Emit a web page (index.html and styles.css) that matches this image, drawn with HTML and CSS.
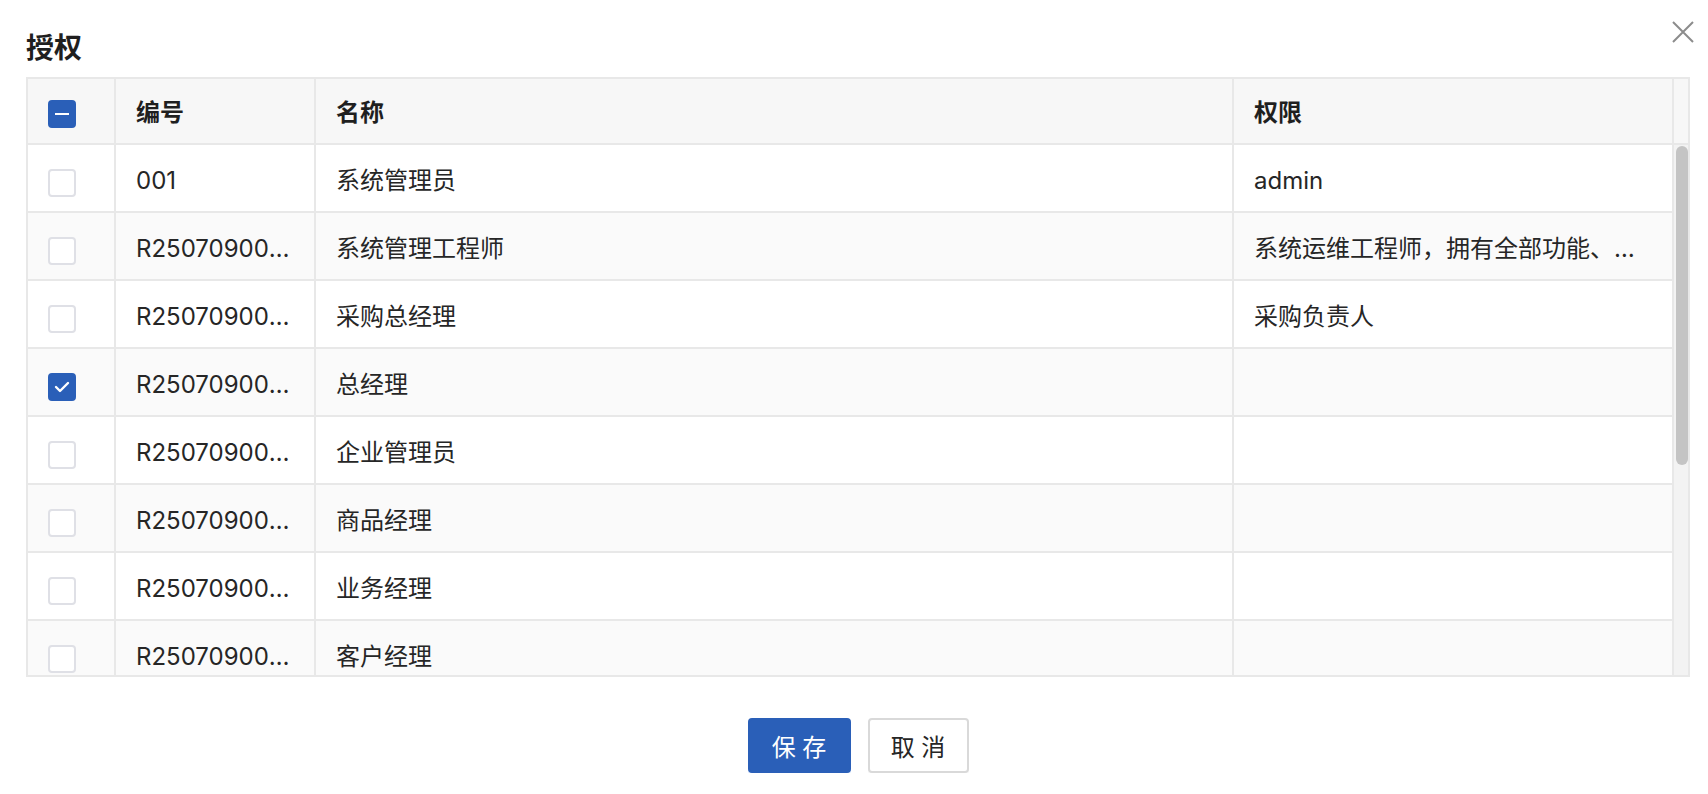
FILE: index.html
```
<!DOCTYPE html>
<html lang="zh-CN">
<head>
<meta charset="utf-8">
<title>授权</title>
<link rel="stylesheet" href="styles.css">
</head>
<body>
<div class="dialog">
  <h1 class="dialog-title">授权</h1>
  <button class="close" aria-label="关闭">
    <svg width="22" height="22" viewBox="0 0 22 22"><path d="M1 1 L21 21 M21 1 L1 21" stroke="#8c8c8c" stroke-width="2" fill="none"/></svg>
  </button>

  <div class="table">
    <div class="thead">
      <div class="cell cell-check"><span class="checkbox indeterminate"></span></div>
      <div class="cell">编号</div>
      <div class="cell">名称</div>
      <div class="cell">权限</div>
      <div class="gutter"></div>
    </div>
    <div class="tbody">
      <div class="rows">
        <div class="row">
          <div class="cell cell-check"><span class="checkbox"></span></div>
          <div class="cell">001</div>
          <div class="cell">系统管理员</div>
          <div class="cell">admin</div>
        </div>
        <div class="row">
          <div class="cell cell-check"><span class="checkbox"></span></div>
          <div class="cell">R25070900001</div>
          <div class="cell">系统管理工程师</div>
          <div class="cell">系统运维工程师，拥有全部功能、全部数据权限</div>
        </div>
        <div class="row">
          <div class="cell cell-check"><span class="checkbox"></span></div>
          <div class="cell">R25070900002</div>
          <div class="cell">采购总经理</div>
          <div class="cell">采购负责人</div>
        </div>
        <div class="row">
          <div class="cell cell-check"><span class="checkbox checked"><svg width="16" height="12" viewBox="0 0 16 12"><path d="M2 6 L6 10 L14 2" stroke="#fff" stroke-width="2.4" fill="none" stroke-linecap="round" stroke-linejoin="round"/></svg></span></div>
          <div class="cell">R25070900003</div>
          <div class="cell">总经理</div>
          <div class="cell"></div>
        </div>
        <div class="row">
          <div class="cell cell-check"><span class="checkbox"></span></div>
          <div class="cell">R25070900004</div>
          <div class="cell">企业管理员</div>
          <div class="cell"></div>
        </div>
        <div class="row">
          <div class="cell cell-check"><span class="checkbox"></span></div>
          <div class="cell">R25070900005</div>
          <div class="cell">商品经理</div>
          <div class="cell"></div>
        </div>
        <div class="row">
          <div class="cell cell-check"><span class="checkbox"></span></div>
          <div class="cell">R25070900006</div>
          <div class="cell">业务经理</div>
          <div class="cell"></div>
        </div>
        <div class="row">
          <div class="cell cell-check"><span class="checkbox"></span></div>
          <div class="cell">R25070900007</div>
          <div class="cell">客户经理</div>
          <div class="cell"></div>
        </div>
        <div class="row">
          <div class="cell cell-check"><span class="checkbox"></span></div>
          <div class="cell">R25070900008</div>
          <div class="cell">财务经理</div>
          <div class="cell"></div>
        </div>
        <div class="row">
          <div class="cell cell-check"><span class="checkbox"></span></div>
          <div class="cell">R25070900009</div>
          <div class="cell">仓库管理员</div>
          <div class="cell"></div>
        </div>
      </div>
      <div class="scrollbar"><div class="thumb"></div></div>
    </div>
  </div>

  <div class="footer">
    <button class="btn btn-primary">保 存</button>
    <button class="btn btn-default">取 消</button>
  </div>
</div>
</body>
</html>
```
FILE: styles.css
```
* { box-sizing: border-box; }
html, body { margin: 0; background: #fff; }
body {
  font-family: Inter, "Noto Sans CJK SC", sans-serif;
  color: #262626;
  font-size: 24px;
}
.dialog {
  position: relative;
  padding: 28px 18px 0 26px;
}
.dialog-title {
  margin: 0 0 9px 0;
  font-size: 28px;
  line-height: 40px;
  font-weight: 700;
  color: #1f1f1f;
}
.close {
  position: absolute;
  top: 21px;
  right: 14px;
  width: 22px;
  height: 22px;
  padding: 0;
  border: 0;
  background: none;
  display: block;
}
.close svg { display: block; }

.table {
  border: 2px solid #e8e8e8;
  width: 1664px;
}
.thead {
  display: grid;
  grid-template-columns: 88px 200px 918px 440px 14px;
  background: #f7f7f7;
  border-bottom: 2px solid #e8e8e8;
  height: 66px;
  font-weight: 700;
  color: #1f1f1f;
}
.cell {
  border-right: 2px solid #e8e8e8;
  padding: 2px 20px 0;
  line-height: 64px;
  white-space: nowrap;
  overflow: hidden;
  text-overflow: ellipsis;
}
.cell-check {
  display: flex;
  align-items: center;
  padding-top: 5px;
}
.gutter { background: #f7f7f7; }

.tbody {
  display: flex;
  height: 530px;
}
.rows {
  width: 1646px;
  overflow: hidden;
}
.row {
  display: grid;
  grid-template-columns: 88px 200px 918px 440px;
  height: 68px;
  border-bottom: 2px solid #e8e8e8;
  background: #fff;
}
.row:nth-child(even) { background: #fafafa; }
.row .cell { line-height: 66px; padding-top: 3px; }
.row .cell-check { padding-top: 9px; }

.scrollbar {
  width: 14px;
  background: #f3f3f3;
  padding: 1px 0 0 2px;
}
.thumb {
  width: 12px;
  height: 319px;
  border-radius: 6px;
  background: #c4c4c4;
}

.checkbox {
  width: 28px;
  height: 28px;
  border: 2px solid #dfe0e6;
  border-radius: 4px;
  background: #fff;
  display: flex;
  align-items: center;
  justify-content: center;
}
.checkbox.checked,
.checkbox.indeterminate {
  background: #2a5fb8;
  border-color: #2a5fb8;
}
.checkbox.indeterminate::after {
  content: "";
  width: 14px;
  height: 2px;
  background: #fff;
}

.footer {
  display: flex;
  justify-content: center;
  gap: 17px;
  padding-top: 41px;
}
.btn {
  height: 55px;
  border-radius: 4px;
  font-family: Inter, "Noto Sans CJK SC", sans-serif;
  font-size: 24px;
  padding: 0;
  border: 2px solid #d9d9d9;
  background: #fff;
  color: #262626;
  box-shadow: 0 3px 0 rgba(0, 0, 0, 0.02);
}
.btn-primary {
  width: 103px;
  background: #2a5fb8;
  border-color: #2a5fb8;
  color: #fff;
  box-shadow: 0 3px 0 rgba(5, 100, 255, 0.08);
}
.btn-default { width: 101px; }
```
